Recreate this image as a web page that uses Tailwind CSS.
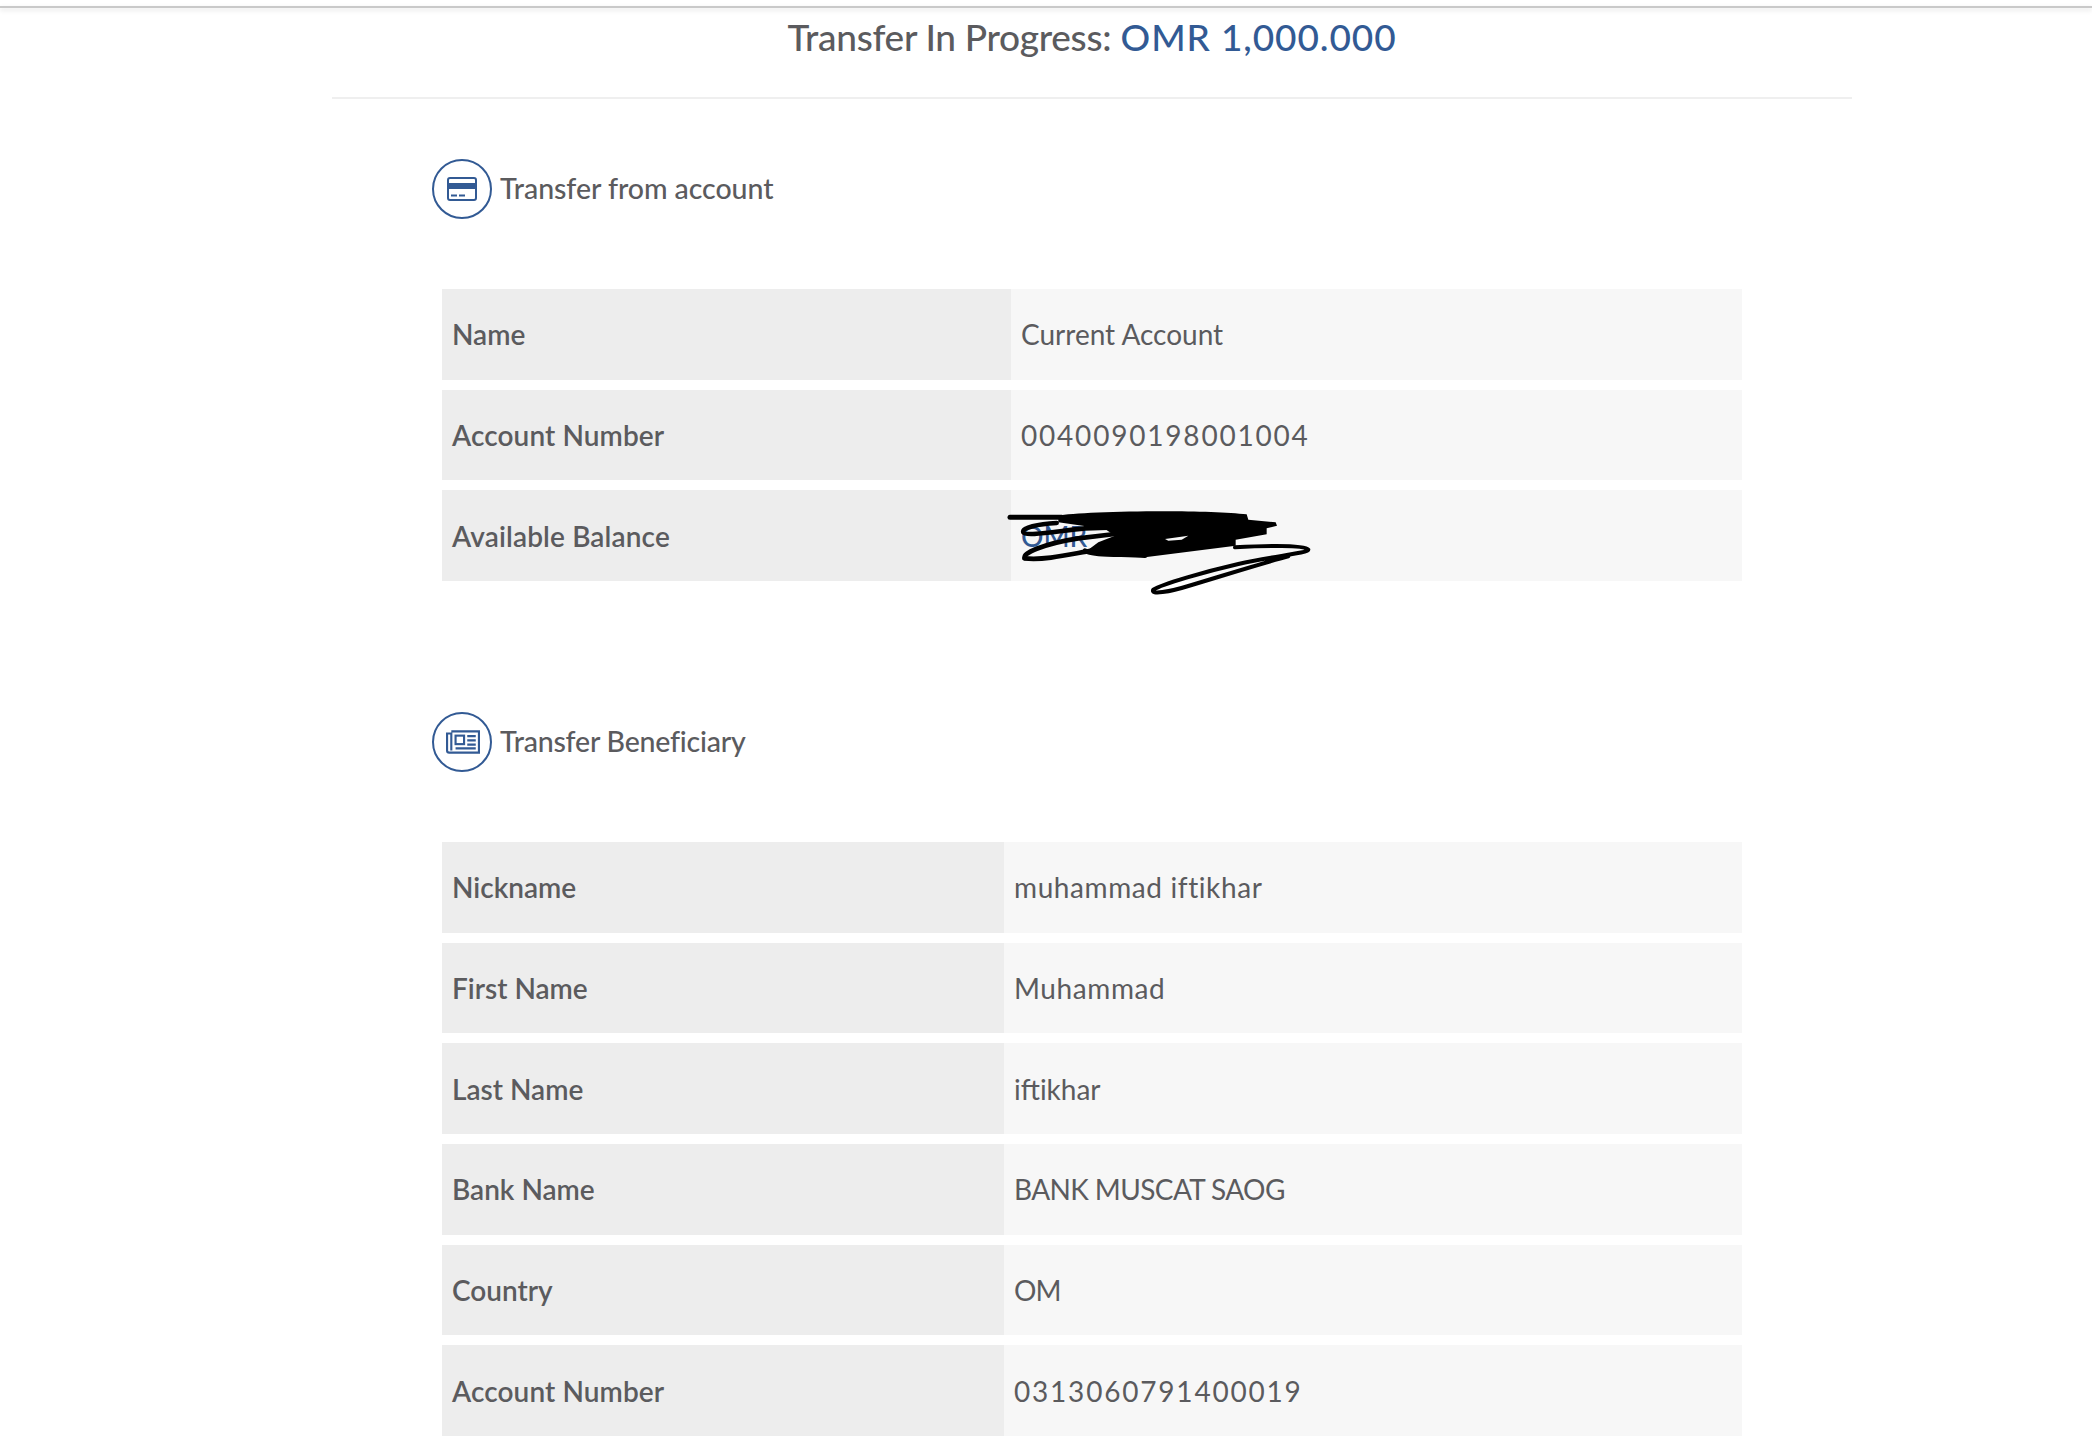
<!DOCTYPE html>
<html lang="en">
<head>
    <meta charset="UTF-8">
    <title>Transfer In Progress</title>
    <script src="https://cdn.jsdelivr.net/npm/@tailwindcss/browser@4"></script>
</head>
<body class="bg-white text-[#5b5b5e] font-['Lato','Noto_Sans',sans-serif] h-[1444px] overflow-hidden">
    <!-- Top bar -->
    <div class="mt-[6px] h-[2px] bg-[#c9c9c9] shadow-[0_2px_5px_rgba(0,0,0,0.14)]"></div>

    <div class="ml-[332px] w-[1520px]">
        <!-- Title -->
        <div class="h-[91px] border-b-2 border-[#efefef] pt-[8px] text-center text-[37px] leading-[42px] font-medium">
            <span class="tracking-[-0.3px]">Transfer In Progress:</span> <span class="font-medium text-[#325a94] tracking-[0.9px]">OMR 1,000.000</span>
        </div>

        <div class="pl-[100px] pr-[110px]">
            <!-- Transfer from account -->
            <div class="mt-[60px] flex items-center gap-2 h-[60px]">
                <div class="w-[60px] h-[60px] rounded-full border-2 border-[#325a94] flex items-center justify-center">
                    <svg width="30" height="24" viewBox="0 0 30 24">
                        <rect x="1" y="1" width="28" height="22" rx="2" fill="none" stroke="#325a94" stroke-width="2"/>
                        <rect x="1" y="6" width="28" height="6" fill="#325a94"/>
                        <rect x="4" y="17.5" width="6" height="2" fill="#325a94"/>
                        <rect x="12" y="17.5" width="6" height="2" fill="#325a94"/>
                    </svg>
                </div>
                <span class="text-[28.5px] leading-[38px] font-medium tracking-[-0.05px] pb-[2px]">Transfer from account</span>
            </div>

            <div class="mt-[70px] ml-[10px] w-[1300px] flex flex-col gap-[10px] text-[28px]">
                <div class="flex h-[90.67px]">
                    <div class="w-[569px] bg-[#ededed] flex items-center px-[10px] font-semibold">Name</div>
                    <div class="flex-1 bg-[#f7f7f7] flex items-center px-[10px]">Current Account</div>
                </div>
                <div class="flex h-[90.67px]">
                    <div class="w-[569px] bg-[#ededed] flex items-center px-[10px] font-semibold tracking-[0.1px]">Account Number</div>
                    <div class="flex-1 bg-[#f7f7f7] flex items-center px-[10px] tracking-[1.8px]">0040090198001004</div>
                </div>
                <div class="flex h-[90.67px]">
                    <div class="w-[569px] bg-[#ededed] flex items-center px-[10px] font-semibold tracking-[0.15px]">Available Balance</div>
                    <div class="relative flex-1 bg-[#f7f7f7] flex items-center px-[10px] text-[#325a94] font-medium">
                        OMR
                        <!-- scribble over the balance -->
                        <svg class="absolute left-[-6px] top-[9px] overflow-visible" width="320" height="100" viewBox="0 0 960 300" fill="none" stroke="#000" stroke-linecap="round" stroke-linejoin="round">
                            <path d="M15 55 H170" stroke-width="15"/>
                            <path d="M160 50 C220 36 600 30 725 46 L730 62 L812 70 L816 80 L785 88 L785 106 L692 122 L692 140 L420 175 L380 170 L240 160 L280 130 L330 110 L300 90 L160 70 Z" fill="#000" stroke="none"/>
                            <path d="M480 120 L550 110 L530 122 L490 125 Z" fill="#f7f7f7" stroke="none"/>
                            <path d="M155 72 C100 75 50 85 55 100 C60 112 130 100 240 88 L330 85" stroke-width="14"/>
                            <path d="M60 176 C50 165 110 135 220 118 L330 105" stroke-width="14"/>
                            <path d="M58 178 C120 185 200 165 260 155" stroke-width="14"/>
                            <path d="M240 155 C260 170 350 165 420 170" stroke-width="14"/>
                            <path d="M690 145 C780 140 900 138 910 152 C912 162 800 172 700 195 C600 218 470 255 445 272 C435 288 490 280 560 258 C660 228 780 190 850 172" stroke-width="12"/>
                        </svg>
                    </div>
                </div>
            </div>

            <!-- Transfer Beneficiary -->
            <div class="mt-[131px] flex items-center gap-2 h-[60px]">
                <div class="w-[60px] h-[60px] rounded-full border-2 border-[#325a94] flex items-center justify-center pl-[2px]">
                    <svg width="34" height="24" viewBox="0 0 32 22" fill="none" stroke="#325a94" stroke-width="2">
                        <path d="M5 1 H31 V21 H3 C1.8 21 1 20.2 1 19 V3 H5 V19"/>
                        <rect x="9" y="5" width="8" height="8"/>
                        <path d="M20 5.5 H28 M20 9.5 H28 M20 13.5 H28 M9 17 H28"/>
                    </svg>
                </div>
                <span class="text-[28.5px] leading-[38px] font-medium tracking-[-0.2px] pb-[2px]">Transfer Beneficiary</span>
            </div>

            <div class="mt-[70px] ml-[10px] w-[1300px] flex flex-col gap-[10px] text-[28px]">
                <div class="flex h-[90.67px]">
                    <div class="w-[562px] bg-[#ededed] flex items-center px-[10px] font-semibold">Nickname</div>
                    <div class="flex-1 bg-[#f7f7f7] flex items-center px-[10px] tracking-[0.6px]">muhammad iftikhar</div>
                </div>
                <div class="flex h-[90.67px]">
                    <div class="w-[562px] bg-[#ededed] flex items-center px-[10px] font-semibold">First Name</div>
                    <div class="flex-1 bg-[#f7f7f7] flex items-center px-[10px] tracking-[0.6px]">Muhammad</div>
                </div>
                <div class="flex h-[90.67px]">
                    <div class="w-[562px] bg-[#ededed] flex items-center px-[10px] font-semibold">Last Name</div>
                    <div class="flex-1 bg-[#f7f7f7] flex items-center px-[10px]">iftikhar</div>
                </div>
                <div class="flex h-[90.67px]">
                    <div class="w-[562px] bg-[#ededed] flex items-center px-[10px] font-semibold">Bank Name</div>
                    <div class="flex-1 bg-[#f7f7f7] flex items-center px-[10px] tracking-[-0.6px]">BANK MUSCAT SAOG</div>
                </div>
                <div class="flex h-[90.67px]">
                    <div class="w-[562px] bg-[#ededed] flex items-center px-[10px] font-semibold">Country</div>
                    <div class="flex-1 bg-[#f7f7f7] flex items-center px-[10px] tracking-[-1px]">OM</div>
                </div>
                <div class="flex h-[90.67px]">
                    <div class="w-[562px] bg-[#ededed] flex items-center px-[10px] font-semibold tracking-[0.1px]">Account Number</div>
                    <div class="flex-1 bg-[#f7f7f7] flex items-center px-[10px] tracking-[1.8px]">0313060791400019</div>
                </div>
            </div>
        </div>
    </div>
</body>
</html>
